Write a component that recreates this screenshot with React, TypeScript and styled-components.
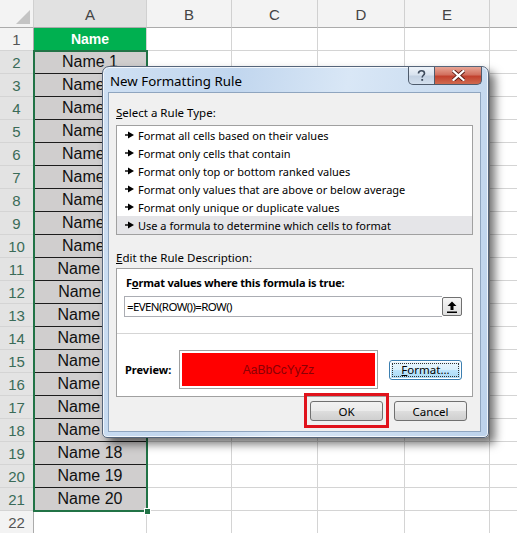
import styled, { createGlobalStyle, css } from "styled-components";

const GlobalStyle = createGlobalStyle`
  html, body {
    margin: 0;
    padding: 0;
    background: #ffffff;
  }
  body {
    width: 517px;
    height: 533px;
    overflow: hidden;
    font-family: "Liberation Sans", Arial, sans-serif;
  }
`;

const UI_FONT = `"Noto Sans", "Open Sans", "DejaVu Sans", sans-serif`;
const GREEN = "#217346";

const Page = styled.div`
  position: relative;
  width: 517px;
  height: 533px;
  overflow: hidden;
`;

/* ---------- spreadsheet ---------- */

const Sheet = styled.div`
  position: relative;
  display: grid;
  grid-template-columns: 34px 113px 85px 86px 87px 85px 40px;
  grid-template-rows: 28px repeat(22, 23px);
`;

const Corner = styled.div`
  position: relative;
  background: #f3f3f3;
  border-right: 1px solid #d0d0d0;
  border-bottom: 1px solid #ababab;
  box-sizing: border-box;

  &::after {
    content: "";
    position: absolute;
    right: 3px;
    bottom: 3px;
    border-style: solid;
    border-width: 0 0 14px 14px;
    border-color: transparent transparent #c4c4c4 transparent;
  }
`;

const ColHead = styled.div<{ active?: boolean }>`
  display: flex;
  align-items: center;
  justify-content: center;
  box-sizing: border-box;
  background: ${(p) => (p.active ? "#e1e1e1" : "#f3f3f3")};
  border-right: 1px solid #d0d0d0;
  border-bottom: 1px solid #ababab;
  color: #444;
  font-size: 15px;
  padding-top: 2px;
`;

const RowHead = styled.div<{ active?: boolean }>`
  display: flex;
  align-items: center;
  justify-content: center;
  box-sizing: border-box;
  background: ${(p) => (p.active ? "#e3e3e3" : "#f3f3f3")};
  border-right: 1px solid #ababab;
  border-bottom: 1px solid #d4d4d4;
  color: ${(p) => (p.active ? "#3a6b58" : "#555")};
  font-size: 15px;
`;

const Cell = styled.div<{ kind?: "header" | "name" }>`
  display: flex;
  align-items: center;
  justify-content: center;
  box-sizing: border-box;
  border-right: 1px solid #d4d4d4;
  border-bottom: 1px solid #d4d4d4;
  font-size: 16px;
  color: #111;

  ${(p) =>
    p.kind === "header" &&
    css`
      background: #00b050;
      color: #ffffff;
      font-weight: bold;
      font-size: 14px;
      border-bottom-color: #1f7a44;
    `}

  ${(p) =>
    p.kind === "name" &&
    css`
      background: #d0cece;
      border-bottom: 1px solid #1c1c1c;
      border-right-color: #b8b6b6;
    `}
`;

/* selection marquee over A2:A21 */
const Selection = styled.div`
  position: absolute;
  left: 33px;
  top: 50px;
  width: 115px;
  height: 462px;
  box-sizing: border-box;
  border: 2px solid ${GREEN};
  pointer-events: none;
`;

const FillHandle = styled.div`
  position: absolute;
  right: -5px;
  bottom: -5px;
  width: 5px;
  height: 5px;
  background: ${GREEN};
  border: 1px solid #ffffff;
`;

/* ---------- dialog ---------- */

const Window = styled.div`
  position: absolute;
  left: 102px;
  top: 66px;
  width: 387px;
  height: 372px;
  box-sizing: border-box;
  display: flex;
  flex-direction: column;
  padding: 0 7px 5px 5px;
  border: 1px solid #56657a;
  border-radius: 7px 7px 5px 5px;
  background: linear-gradient(
    100deg,
    #cfe0f3 0%,
    #c1d6ee 30%,
    #d9e7f6 55%,
    #bcd2eb 100%
  );
  box-shadow: inset 0 0 0 1px rgba(255, 255, 255, 0.75),
    6px 6px 10px rgba(0, 0, 0, 0.55);
  font-family: ${UI_FONT};
  font-size: 11px;
  color: #000;
  z-index: 5;
`;

const TitleBar = styled.div`
  height: 25px;
  display: flex;
  align-items: flex-start;
  justify-content: space-between;
`;

const Title = styled.span`
  padding: 6px 0 0 2px;
  font-size: 13.3px;
  line-height: 17px;
`;

const Captions = styled.div`
  display: flex;
  margin-right: -1px;
`;

const CaptionButton = styled.div<{ close?: boolean }>`
  height: 18px;
  width: ${(p) => (p.close ? "47px" : "27px")};
  box-sizing: border-box;
  display: flex;
  align-items: center;
  justify-content: center;
  border: 1px solid #4e5b6c;
  border-top: none;
  ${(p) =>
    p.close
      ? css`
          border-left: none;
          border-radius: 0 0 5px 0;
          background: linear-gradient(180deg, #e8a595 0%, #d2705f 45%, #c2412e 55%, #cf6a4f 100%);
          color: #fff;
        `
      : css`
          border-radius: 0 0 0 5px;
          background: linear-gradient(180deg, #eef3f9 0%, #d9e3ef 45%, #c3d1e2 55%, #d4e0ee 100%);
          color: #566;
        `}
`;

const Content = styled.div`
  flex: 1;
  display: flex;
  flex-direction: column;
  background: #f0f0f0;
  border: 1px solid #8fa5bf;
  padding: 0 7px 0 7px;
`;

const GroupLabel = styled.div<{ top: number }>`
  margin-top: ${(p) => p.top}px;
  line-height: 16px;
  font-size: 11.5px;
`;

const ListBox = styled.div`
  margin-top: 4px;
  background: #fff;
  border: 1px solid #a0a0a0;
  display: flex;
  flex-direction: column;
`;

const ListItem = styled.div<{ selected?: boolean }>`
  height: 18px;
  display: flex;
  align-items: center;
  gap: 4px;
  padding-left: 8px;
  background: ${(p) => (p.selected ? "#e5e5e8" : "transparent")};
`;

const DescBox = styled.div`
  margin-top: 2px;
  background: #fff;
  border: 1px solid #a0a0a0;
  display: flex;
  flex-direction: column;
  padding: 6px 0 7px;
`;

const BoldLabel = styled.div`
  font-weight: bold;
  line-height: 16px;
  padding-left: 9px;
  letter-spacing: -0.2px;
`;

const FormulaRow = styled.div`
  margin: 5px 10px 0 7px;
  display: flex;
  align-items: center;
`;

const FormulaInput = styled.div`
  flex: 1;
  height: 21px;
  box-sizing: border-box;
  border: 1px solid #abadb3;
  border-right: none;
  display: flex;
  align-items: center;
  padding-left: 2px;
  font-size: 11.5px;
  letter-spacing: -0.6px;
`;

const RefButton = styled.div`
  width: 20px;
  height: 19px;
  box-sizing: border-box;
  border: 1px solid #707070;
  border-radius: 2px;
  background: linear-gradient(180deg, #f6f6f6, #dedede);
  display: flex;
  align-items: center;
  justify-content: center;
`;

const Separator = styled.div`
  margin-top: 16px;
  height: 1px;
  background: #d5d5d5;
`;

const PreviewRow = styled.div`
  margin-top: 16px;
  display: flex;
  align-items: center;
  padding-left: 8px;
`;

const PreviewLabel = styled.div`
  width: 54px;
  font-weight: bold;
`;

const PreviewFrame = styled.div`
  width: 199px;
  height: 39px;
  box-sizing: border-box;
  border: 1px solid #a0a0a0;
  padding: 2px;
  display: flex;
`;

const PreviewFill = styled.div`
  flex: 1;
  background: #ff0000;
  color: #8a0005;
  display: flex;
  align-items: center;
  justify-content: center;
  font-family: "Liberation Sans", Arial, sans-serif;
  font-size: 12px;
`;

const Button = styled.div<{ focused?: boolean; marked?: boolean }>`
  position: relative;
  width: 73px;
  height: 20px;
  box-sizing: border-box;
  display: flex;
  align-items: center;
  justify-content: center;
  border: 1px solid #707070;
  border-radius: 3px;
  background: linear-gradient(180deg, #f2f2f2 0%, #ebebeb 48%, #dddddd 52%, #cfcfcf 100%);
  font-size: 11.5px;

  ${(p) =>
    p.focused &&
    css`
      border-color: #3c7fb1;
      background: linear-gradient(180deg, #eaf6fd 0%, #d9f0fc 48%, #bee6fd 52%, #a7d9f5 100%);
      box-shadow: inset 0 0 0 1px #fff;
      outline: 1px dotted #333;
      outline-offset: -4px;
    `}

  ${(p) =>
    p.marked &&
    css`
      &::after {
        content: "";
        position: absolute;
        left: -7px;
        right: -7px;
        top: -9px;
        bottom: -8px;
        border: 3px solid #e0121b;
      }
    `}
`;

const FormatButton = styled(Button)`
  margin-left: 11px;
`;

const Footer = styled.div`
  margin-top: 4px;
  display: flex;
  justify-content: flex-end;
  gap: 11px;
  padding-right: 6px;
`;

const Arrow = () => (
  <svg width="9" height="8" viewBox="0 0 9 8">
    <rect x="0" y="3.3" width="4" height="1.4" fill="#000" />
    <path d="M3 0.5 L9 4 L3 7.5 Z" fill="#000" />
  </svg>
);

const UploadIcon = () => (
  <svg width="10" height="12" viewBox="0 0 10 12">
    <path d="M5 0.5 L9.5 5 L6.5 5 L6.5 9 L3.5 9 L3.5 5 L0.5 5 Z" fill="#000" />
    <rect x="0" y="10.5" width="10" height="1.5" fill="#000" />
  </svg>
);

const ruleTypes = [
  "Format all cells based on their values",
  "Format only cells that contain",
  "Format only top or bottom ranked values",
  "Format only values that are above or below average",
  "Format only unique or duplicate values",
  "Use a formula to determine which cells to format",
];

const cols = ["A", "B", "C", "D", "E", ""];

export default function App() {
  const rows = Array.from({ length: 22 }, (_, i) => i + 1);

  return (
    <Page>
      <GlobalStyle />
      <Sheet>
        <Corner />
        {cols.map((c, i) => (
          <ColHead key={c + i} active={c === "A"}>
            {c}
          </ColHead>
        ))}
        {rows.map((r) => [
          <RowHead key={"h" + r} active={r >= 2 && r <= 21}>
            {r}
          </RowHead>,
          <Cell
            key={"a" + r}
            kind={r === 1 ? "header" : r <= 21 ? "name" : undefined}
          >
            {r === 1 ? "Name" : r <= 21 ? `Name ${r - 1}` : ""}
          </Cell>,
          ...[0, 1, 2, 3, 4].map((c) => <Cell key={`c${r}-${c}`} />),
        ])}
        <Selection>
          <FillHandle />
        </Selection>
      </Sheet>

      <Window>
        <TitleBar>
          <Title>New Formatting Rule</Title>
          <Captions>
            <CaptionButton>
              <svg width="9" height="12" viewBox="0 0 9 12">
                <path
                  d="M1.5 3.5 C1.5 1.5 3 0.8 4.5 0.8 C6.3 0.8 7.5 2 7.5 3.4 C7.5 5 5.2 5.6 5.2 7.4"
                  stroke="#3d4a5c"
                  strokeWidth="1.6"
                  fill="none"
                />
                <rect x="4.3" y="9" width="1.8" height="1.8" fill="#3d4a5c" />
              </svg>
            </CaptionButton>
            <CaptionButton close>
              <svg width="13" height="11" viewBox="0 0 13 11">
                <path
                  d="M1.5 1 L11.5 10 M11.5 1 L1.5 10"
                  stroke="#5a1a12"
                  strokeWidth="4"
                  strokeLinecap="square"
                />
                <path
                  d="M1.5 1 L11.5 10 M11.5 1 L1.5 10"
                  stroke="#ffffff"
                  strokeWidth="2.2"
                  strokeLinecap="square"
                />
              </svg>
            </CaptionButton>
          </Captions>
        </TitleBar>

        <Content>
          <GroupLabel top={12}>
            <u>S</u>elect a Rule Type:
          </GroupLabel>
          <ListBox>
            {ruleTypes.map((t, i) => (
              <ListItem key={t} selected={i === ruleTypes.length - 1}>
                <Arrow />
                {t}
              </ListItem>
            ))}
          </ListBox>

          <GroupLabel top={15}>
            <u>E</u>dit the Rule Description:
          </GroupLabel>
          <DescBox>
            <BoldLabel>
              F<u>o</u>rmat values where this formula is true:
            </BoldLabel>
            <FormulaRow>
              <FormulaInput>=EVEN(ROW())=ROW()</FormulaInput>
              <RefButton>
                <UploadIcon />
              </RefButton>
            </FormulaRow>
            <Separator />
            <PreviewRow>
              <PreviewLabel>Preview:</PreviewLabel>
              <PreviewFrame>
                <PreviewFill>AaBbCcYyZz</PreviewFill>
              </PreviewFrame>
              <FormatButton focused>
                <span>
                  <u>F</u>ormat...
                </span>
              </FormatButton>
            </PreviewRow>
          </DescBox>

          <Footer>
            <Button marked>OK</Button>
            <Button>Cancel</Button>
          </Footer>
        </Content>
      </Window>
    </Page>
  );
}
